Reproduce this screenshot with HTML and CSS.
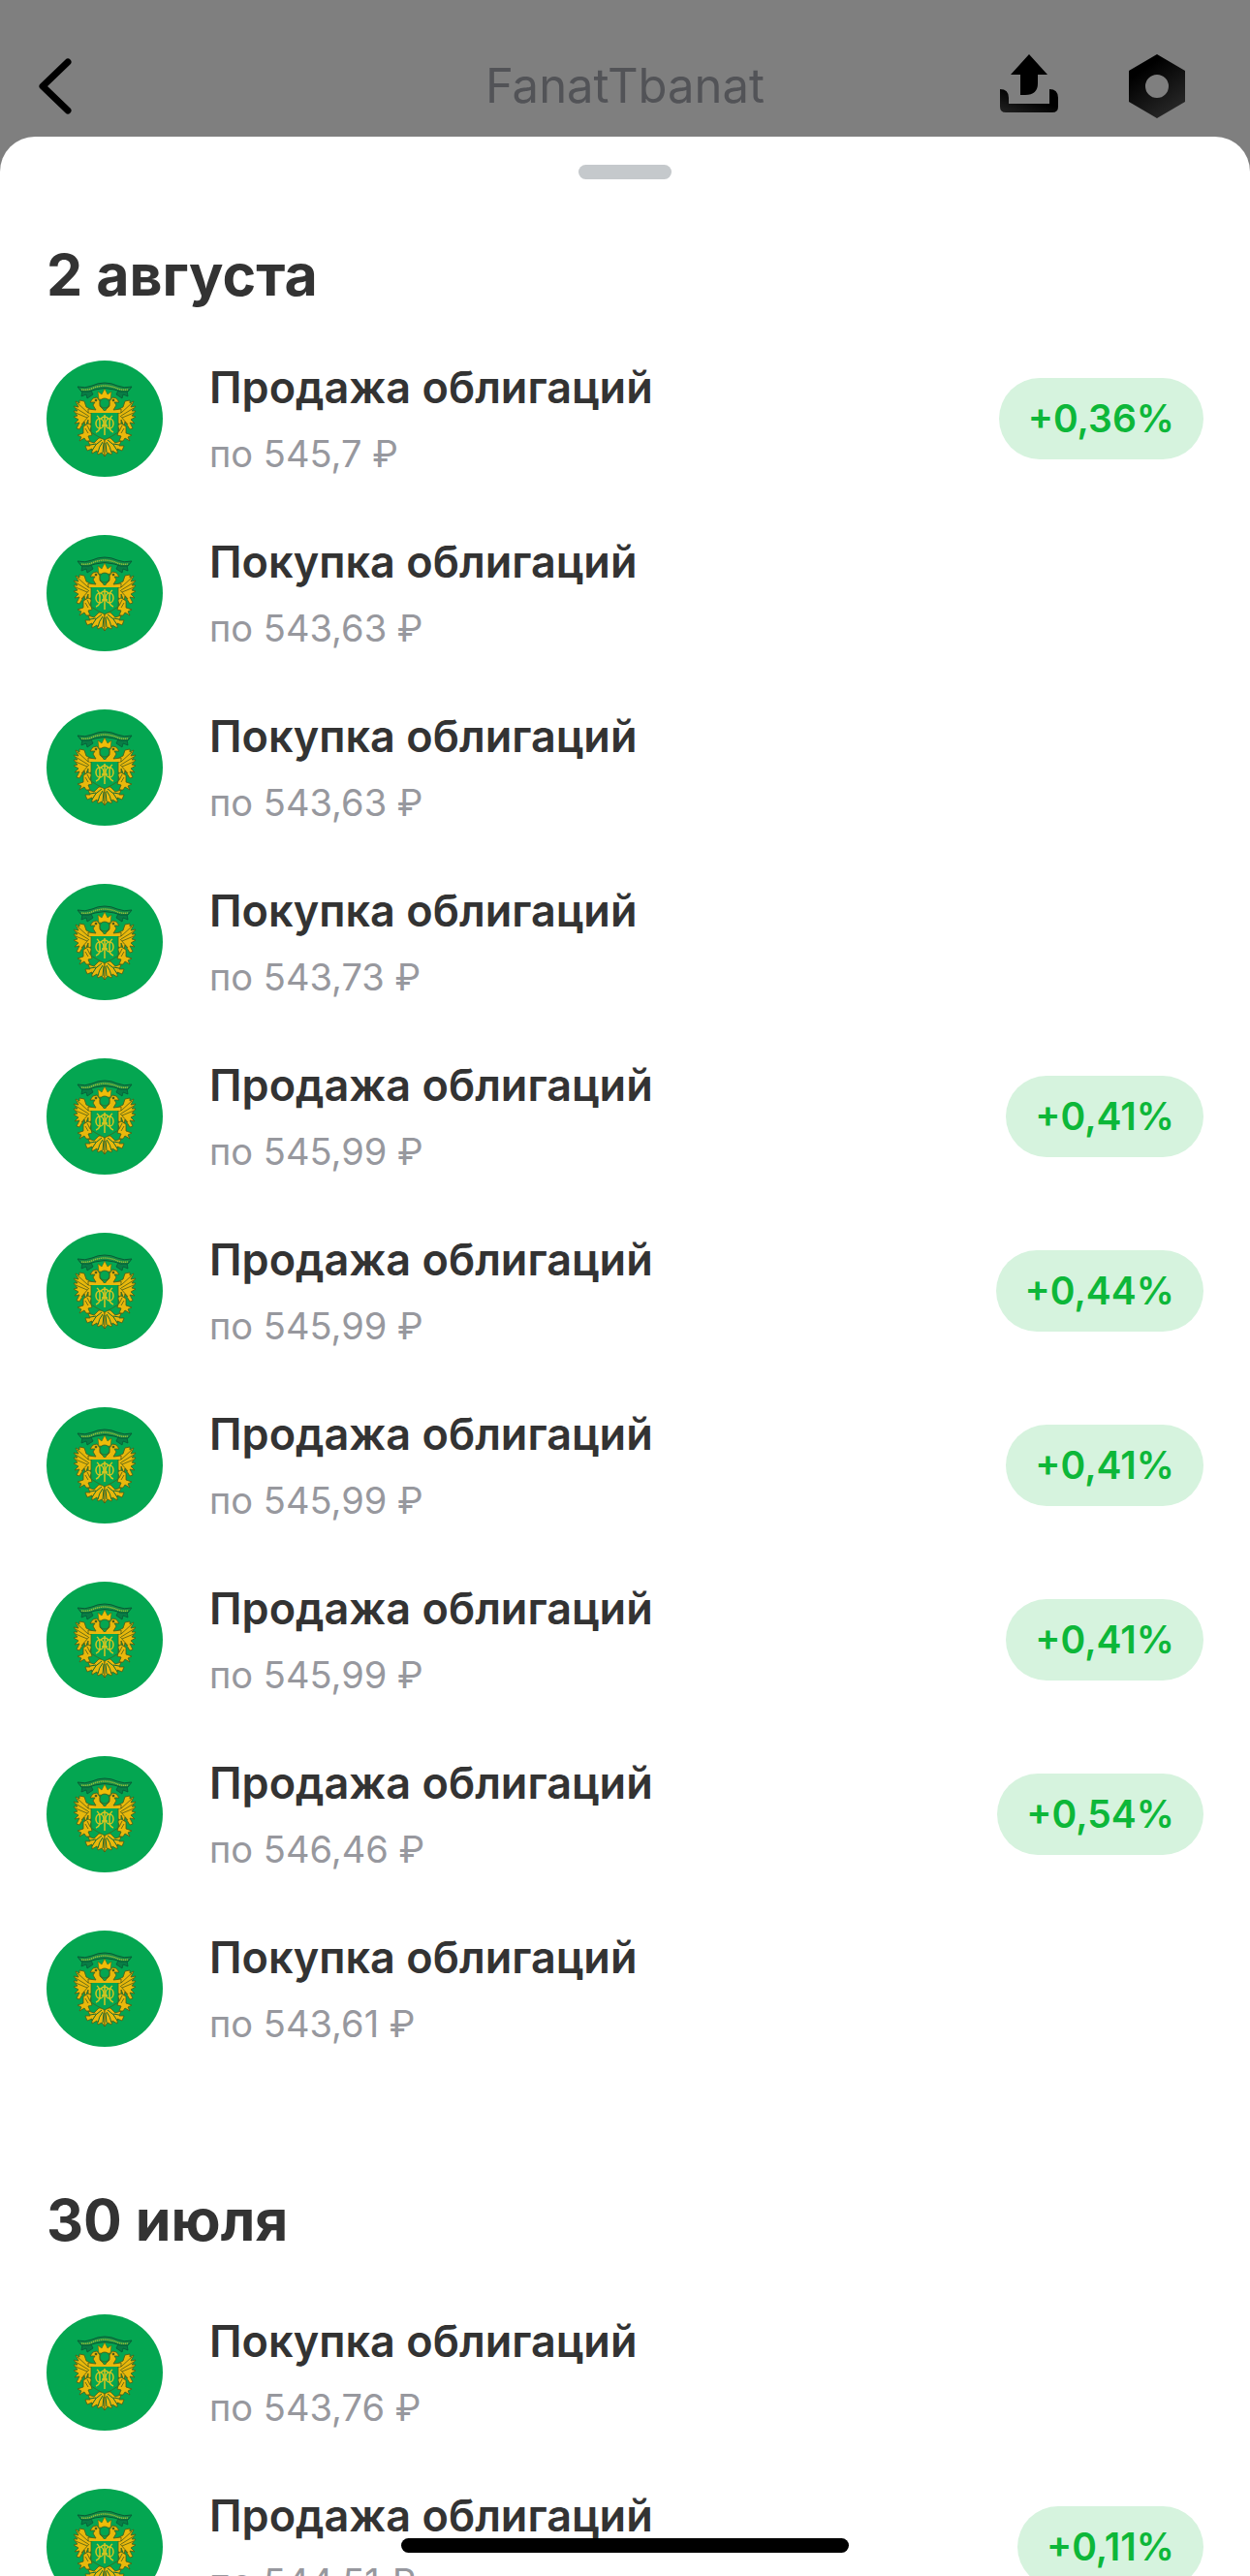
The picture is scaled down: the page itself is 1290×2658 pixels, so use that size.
FILE: index.html
```
<!DOCTYPE html>
<html lang="ru">
<head>
    <meta charset="UTF-8">
    <meta name="viewport" content="width=device-width, initial-scale=1.0">
    <title>FanatTbanat</title>
    <link rel="stylesheet" href="styles.css">
</head>
<body>

    <!-- Emblem shared by all rows -->
    <svg class="sprite" aria-hidden="true">
        <symbol id="emblem" viewBox="0 0 120 120">
            <circle cx="60" cy="60" r="60" fill="#04a651"/>
            <g id="emblem-half" stroke="#4d5a16" stroke-width="0.8" stroke-linejoin="round">
                <!-- wing -->
                <path fill="#e9b80c" d="M47 51 L41 48 L39 42 L34 41 L34 44 L30 42 L33 48 L28 47 L32 52 L28 52 L32 57 L28 58 L33 61 L29 65 L34 64 L31 70 L34 71 L39 63 L40 68 L43 61 L43 67 L47 64 Z"/>
                <path fill="none" d="M32 44 L43 54 M30 49 L43 57 M30 54 L42 59 M36 66 L44 57"/>
                <!-- neck and head -->
                <path fill="#e9b80c" d="M59 51 L55 47 L55 42 L52 38 L48 39 L45 43 L50 43 L48 46 L51 51 L43 50 L43 54 L60 55 Z"/>
                <circle cx="51" cy="41" r="1" fill="#17452a"/>
                <!-- leg, sceptre -->
                <path fill="#e9b80c" d="M43 65 L47 67 L45 71 L47 77 L43 78 L45 83 L41 83 L39 80 L34 83 L36 79 L32 77 L38 75 L38 68 Z"/>
                <path fill="none" d="M40 70 L43 75 M42 67 L45 73"/>
                <!-- tail feathers -->
                <path fill="#e9b80c" d="M60 80 L54 80 L49 85 L43 83 L45 88 L40 88 L42 93 L47 91 L47 96 L52 93 L53 97 L57 95 L60 99 Z"/>
                <path fill="none" stroke="#176a34" stroke-width="1" d="M57 82 Q50 86 47 93 M58 84 Q54 89 53 95 M59 85 L58 95 M45 87 L51 86"/>
            </g>
            <use href="#emblem-half" transform="matrix(-1 0 0 1 120 0)"/>
            <path fill="#f0bd08" stroke="#4d5a16" stroke-width="0.5" d="M54 40 L53 32 L57 35 L60 29 L63 35 L67 32 L66 40 Z"/>
            <ellipse cx="60" cy="44" rx="5" ry="5" fill="#04a651" stroke="#4d5a16" stroke-width="0.8"/>
            <path fill="#04a651" stroke="#3d6a1c" stroke-width="0.8" d="M46 53 H74 V74 Q68 78 60 82 Q52 78 46 74 Z"/>
            <path fill="none" stroke="#e9b80c" stroke-width="2" d="M44 53 H76"/>
            <!-- monogram -->
            <g fill="none" stroke="#d6c520" stroke-width="1.5">
                <path d="M60 56 V77 M56 60 Q60 56 64 60 M57 67 H63"/>
                <ellipse cx="55" cy="65" rx="4" ry="5"/>
                <ellipse cx="65" cy="65" rx="4" ry="5"/>
                <path d="M52 57 Q55 59 55 64 V70 Q54 73 51 74 M68 57 Q65 59 65 64 V70 Q66 73 69 74"/>
            </g>
            <!-- ribbon -->
            <path fill="#087d45" stroke="#075b36" stroke-width="0.8" d="M37 31 L36 37 L41 35 L42 39 L48 35 L46 31 Z M83 31 L84 37 L79 35 L78 39 L72 35 L74 31 Z"/>
            <path fill="#128a45" stroke="#075b36" stroke-width="1" d="M32 27 Q40 29 47 26 Q53 23 60 23 Q67 23 73 26 Q80 29 88 27 L84 32 Q76 33 70 30 Q60 27 50 30 Q44 33 36 32 Z"/>
            <path fill="none" stroke="#8fbc3c" stroke-width="1.5" stroke-dasharray="1.4 0.6" d="M36 30 Q43 31 49 28 Q60 24 71 28 Q77 31 84 30"/>
        </symbol>
    </svg>

    <header class="topbar">
        <button class="icon-button" type="button" aria-label="Назад">
            <svg width="34" height="58" viewBox="0 0 34 58">
                <path d="M30 4 L4 29 L30 54" fill="none" stroke="#000" stroke-width="7" stroke-linecap="round" stroke-linejoin="round"/>
            </svg>
        </button>
        <h1 class="topbar-title">FanatTbanat</h1>
        <div class="topbar-actions">
            <button class="icon-button" type="button" aria-label="Поделиться">
                <svg width="60" height="66" viewBox="0 0 60 66">
                    <defs>
                        <linearGradient id="trayFill" x1="0" y1="1" x2="1" y2="0">
                            <stop offset="0" stop-color="#222"/>
                            <stop offset="0.6" stop-color="#000"/>
                        </linearGradient>
                    </defs>
                    <path d="M30 0 L49 21 H39 V30 Q39 42 26 42 H21 V21 H11 Z"/>
                    <path d="M0 36 Q9 36 9 45 V51 H51 V36 Q60 36 60 45 V54 Q60 60 54 60 H6 Q0 60 0 54 Z" fill="url(#trayFill)"/>
                </svg>
            </button>
            <button class="icon-button" type="button" aria-label="Настройки">
                <svg width="58" height="66" viewBox="0 0 58 66">
                    <defs>
                        <linearGradient id="nutFill" x1="0.2" y1="0" x2="0.8" y2="1">
                            <stop offset="0.2" stop-color="#000"/>
                            <stop offset="1" stop-color="#2b2b2b"/>
                        </linearGradient>
                    </defs>
                    <path d="M29 0 L58 17 V49 L29 66 L0 49 V17 Z M29 21 A12 12 0 1 0 29 45 A12 12 0 1 0 29 21 Z" fill="url(#nutFill)" fill-rule="evenodd"/>
                </svg>
            </button>
        </div>
    </header>

    <main class="sheet">
        <div class="handle"></div>

        <section class="day">
            <h2 class="day-title">2 августа</h2>
            <ul class="deals">
                <li class="deal">
                    <svg class="deal-logo"><use href="#emblem"/></svg>
                    <div class="deal-info">
                        <div class="deal-name">Продажа облигаций</div>
                        <div class="deal-price">по 545,7 ₽</div>
                    </div>
                    <span class="badge">+0,36%</span>
                </li>
                <li class="deal">
                    <svg class="deal-logo"><use href="#emblem"/></svg>
                    <div class="deal-info">
                        <div class="deal-name">Покупка облигаций</div>
                        <div class="deal-price">по 543,63 ₽</div>
                    </div>
                </li>
                <li class="deal">
                    <svg class="deal-logo"><use href="#emblem"/></svg>
                    <div class="deal-info">
                        <div class="deal-name">Покупка облигаций</div>
                        <div class="deal-price">по 543,63 ₽</div>
                    </div>
                </li>
                <li class="deal">
                    <svg class="deal-logo"><use href="#emblem"/></svg>
                    <div class="deal-info">
                        <div class="deal-name">Покупка облигаций</div>
                        <div class="deal-price">по 543,73 ₽</div>
                    </div>
                </li>
                <li class="deal">
                    <svg class="deal-logo"><use href="#emblem"/></svg>
                    <div class="deal-info">
                        <div class="deal-name">Продажа облигаций</div>
                        <div class="deal-price">по 545,99 ₽</div>
                    </div>
                    <span class="badge">+0,41%</span>
                </li>
                <li class="deal">
                    <svg class="deal-logo"><use href="#emblem"/></svg>
                    <div class="deal-info">
                        <div class="deal-name">Продажа облигаций</div>
                        <div class="deal-price">по 545,99 ₽</div>
                    </div>
                    <span class="badge">+0,44%</span>
                </li>
                <li class="deal">
                    <svg class="deal-logo"><use href="#emblem"/></svg>
                    <div class="deal-info">
                        <div class="deal-name">Продажа облигаций</div>
                        <div class="deal-price">по 545,99 ₽</div>
                    </div>
                    <span class="badge">+0,41%</span>
                </li>
                <li class="deal">
                    <svg class="deal-logo"><use href="#emblem"/></svg>
                    <div class="deal-info">
                        <div class="deal-name">Продажа облигаций</div>
                        <div class="deal-price">по 545,99 ₽</div>
                    </div>
                    <span class="badge">+0,41%</span>
                </li>
                <li class="deal">
                    <svg class="deal-logo"><use href="#emblem"/></svg>
                    <div class="deal-info">
                        <div class="deal-name">Продажа облигаций</div>
                        <div class="deal-price">по 546,46 ₽</div>
                    </div>
                    <span class="badge">+0,54%</span>
                </li>
                <li class="deal">
                    <svg class="deal-logo"><use href="#emblem"/></svg>
                    <div class="deal-info">
                        <div class="deal-name">Покупка облигаций</div>
                        <div class="deal-price">по 543,61 ₽</div>
                    </div>
                </li>
            </ul>
        </section>

        <section class="day">
            <h2 class="day-title">30 июля</h2>
            <ul class="deals">
                <li class="deal">
                    <svg class="deal-logo"><use href="#emblem"/></svg>
                    <div class="deal-info">
                        <div class="deal-name">Покупка облигаций</div>
                        <div class="deal-price">по 543,76 ₽</div>
                    </div>
                </li>
                <li class="deal">
                    <svg class="deal-logo"><use href="#emblem"/></svg>
                    <div class="deal-info">
                        <div class="deal-name">Продажа облигаций</div>
                        <div class="deal-price">по 544,51 ₽</div>
                    </div>
                    <span class="badge">+0,11%</span>
                </li>
            </ul>
        </section>
    </main>

    <div class="home-indicator"></div>

</body>
</html>
```
FILE: styles.css
```
/* General styles */
* {
    box-sizing: border-box;
}

body {
    font-family: Inter, 'Liberation Sans', sans-serif;
    margin: 0;
    height: 100vh;
    overflow: hidden;
    background-color: #7f7f7f;
    color: #333;
    display: flex;
    flex-direction: column;
}

.sprite {
    position: absolute;
    width: 0;
    height: 0;
}

/* Top bar, dimmed behind the sheet */
.topbar {
    display: grid;
    grid-template-columns: 1fr auto 1fr;
    align-items: center;
    padding: 56px 40px 19px;
}

.topbar-title {
    margin: 0;
    font-size: 49px;
    font-weight: 400;
    line-height: 66px;
    color: #525357;
}

.topbar-actions {
    display: flex;
    justify-content: flex-end;
    gap: 73px;
    padding-right: 27px;
}

.icon-button {
    display: flex;
    justify-self: start;
    padding: 0;
    border: none;
    background: none;
    cursor: pointer;
}

/* Sheet */
.sheet {
    flex: 1;
    min-height: 0;
    overflow: hidden;
    padding: 29px 48px 0;
    background-color: #fff;
    border-radius: 36px 36px 0 0;
}

.handle {
    width: 96px;
    height: 15px;
    margin: 0 auto 63px;
    border-radius: 8px;
    background-color: #c5c9cc;
}

.day + .day {
    margin-top: 143px;
}

.day-title {
    margin: 0 0 52px;
    font-size: 59px;
    font-weight: 700;
    line-height: 72px;
}

.day + .day .day-title {
    margin-bottom: 61px;
}

.deals {
    display: flex;
    flex-direction: column;
    gap: 60px;
    margin: 0;
    padding: 0;
    list-style: none;
}

.deal {
    display: flex;
    align-items: center;
}

.deal-logo {
    width: 120px;
    height: 120px;
    margin-right: 48px;
    flex-shrink: 0;
}

.deal-info {
    display: flex;
    flex-direction: column;
    gap: 16px;
    flex: 1;
}

.deal-name {
    font-size: 45px;
    font-weight: 600;
    line-height: 56px;
}

.deal-price {
    font-size: 38px;
    line-height: 48px;
    color: #97989e;
}

.badge {
    padding: 0 30px;
    border-radius: 42px;
    background-color: #d6f3de;
    color: #0db739;
    font-size: 39px;
    font-weight: 600;
    line-height: 84px;
}

.home-indicator {
    position: fixed;
    bottom: 24px;
    left: 50%;
    width: 462px;
    height: 15px;
    border-radius: 8px;
    background-color: #000;
    transform: translateX(-50%);
}
```
